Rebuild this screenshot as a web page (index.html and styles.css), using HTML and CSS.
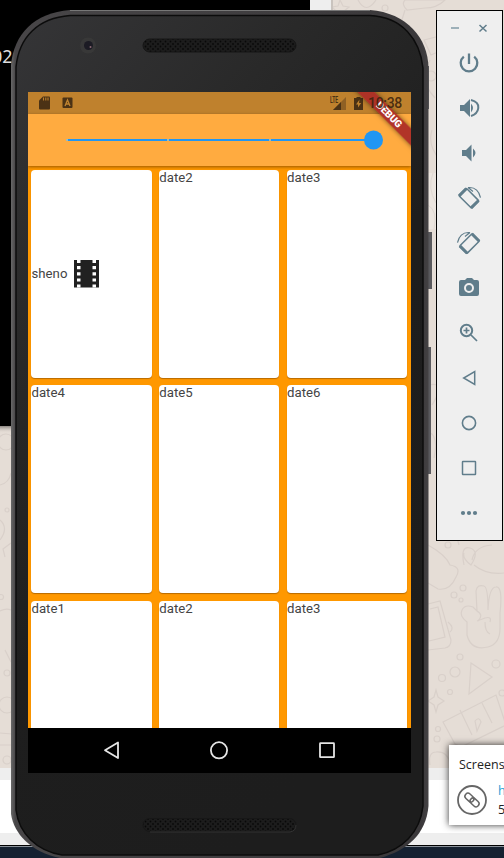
FILE: index.html
```
<!DOCTYPE html>
<html lang="en">
<head>
<meta charset="utf-8">
<title>Emulator</title>
<link rel="stylesheet" href="styles.css">
</head>
<body>
<div class="desktop">
  <svg class="wallpaper" width="504" height="858" viewBox="0 0 504 858">
    <defs><linearGradient id="shade" x1="0" y1="0" x2="0" y2="1"><stop offset="0" stop-color="#8b8580"/><stop offset="1" stop-color="#e5ddd6" stop-opacity="0"/></linearGradient></defs>
    <rect width="504" height="768" fill="#e5ddd6"/>
    <g fill="none" stroke="#d9d0ca" stroke-width="1.2">
      <path d="M340 0l3 6 6 1-5 4 1 6-5-3-5 3 1-6-4-4 6-1zM358 0q8 15 18 0M407 10q-6-6-2-10h40q-8 8-20 8zM405 10l-4 13M424 40l20-5 5 12-18 8zM430 60q-12 20 5 38M432 130q-5 15 8 30"/>
      <circle cx="385" cy="8" r="3"/><circle cx="431" cy="76" r="5"/>
      <path d="M428 545q18 10 22 20q12 2 6 12q-6 14-18 12l-10-6M464 565q-4-20 6-17t1 17q-9-7-7-12M472 560q3-14 20-15M474 565q12 10 30 8"/>
      <path d="M428 604l12-3 11 39q0 7-6 8l-17 2M430 609l8-2 7 30-16 4M448 622q7 6 2 10"/>
      <path d="M467 622q-8-6-5-12t11-3l4 4-1-20q1-7 8-5 4 1 4 24 1-23 8-23 7-1 4 26v15q0 16-12 19-17 4-21-12zM477 611q7 4 1 10M477 621l8-3q7-2 5 4M485 622q0 10 5 12"/>
      <path d="M471 663l21 14-23 17zM428 701l6-4 2-7 2 7 6 4-6 4-2 7-2-7zM443 722l53-27 10 30-45 22-6-3zM460 710l12 25M482 703l10 20M475 721q4-5 6 1l-4 9z"/>
      <path d="M455 530l4 15M430 765q-2-13 6-13 12-1 14 12M429 385q18-4 3 20M429 432q10 5 5 26"/>
      <circle cx="448" cy="545" r="3"/><circle cx="463" cy="588" r="3"/><circle cx="454" cy="595" r="3"/><circle cx="461" cy="600" r="2"/><circle cx="460" cy="657" r="3"/><circle cx="455" cy="672" r="5"/><circle cx="442" cy="678" r="3.500"/><circle cx="496" cy="664" r="4"/><circle cx="450" cy="692" r="2.500"/><circle cx="438" cy="729" r="2.500"/><circle cx="437" cy="739" r="3"/><circle cx="502" cy="693" r="3"/>
      <circle cx="6" cy="442" r="8"/><circle cx="7" cy="510" r="2"/><circle cx="7" cy="673" r="3"/><circle cx="1" cy="597" r="2.500"/><circle cx="7" cy="705" r="8"/><circle cx="7" cy="760" r="4"/>
      <path d="M0 733l12 1M0 745h12M0 485q9-2 11-12M0 520q9 8 0 20M11 543l-8 6 2 8M0 611q6-3 11-1M5 650l6 12"/>
    </g>
    <rect x="310" width="21" height="80" fill="#eee"/>
    <rect x="331" width="2" height="80" fill="#c9c3be"/>
    <rect y="426" width="20" height="7" fill="url(#shade)"/>
    <rect width="310" height="426" fill="#000"/>
    <rect x="400" y="173" width="36" height="56" fill="#ebe5df"/>
    <path d="M433 173q-6 15 3 30M428 205q10 6 6 24" fill="none" stroke="#dfd8d2"/>
    <rect y="768" width="504" height="12" fill="#eee"/>
    <rect y="780" width="504" height="53" fill="#fff"/>
    <rect y="833" width="504" height="12" fill="#eee"/>
    <rect y="845" width="504" height="1" fill="#000"/>
    <rect y="846" width="504" height="1" fill="#8a9199"/>
    <rect y="847" width="504" height="11" fill="#152131"/>
  </svg>
  <span class="terminal-text">02</span>

  <svg class="phone-body" width="436" height="858" viewBox="0 0 436 858">
    <defs>
      <linearGradient id="face" x1="0" y1="0" x2=".55" y2="1"><stop offset="0" stop-color="#353537"/><stop offset=".3" stop-color="#292929"/><stop offset=".6" stop-color="#1e1e1e"/><stop offset="1" stop-color="#1d1d1d"/></linearGradient>
      <linearGradient id="rim"><stop offset="0" stop-color="#686868"/><stop offset=".01" stop-color="#484648"/><stop offset=".98" stop-color="#3a383a"/><stop offset="1" stop-color="#434143"/></linearGradient>
      <pattern id="mesh" x="144" y="40" width="5" height="5" patternUnits="userSpaceOnUse"><rect width="5" height="5" fill="#1c1c1c"/><circle cx="1.500" cy="1.500" r=".9" fill="#080808"/><circle cx="4" cy="4" r=".9" fill="#080808"/></pattern>
    </defs>
    <path d="M428 66h1v43h-1zM428 232h4v57h-4zM428 347h3v127h-3z" fill="#59595d"/>
    <path d="M70 10H370C407 13 428 38 428.500 68V806C426 834 408 850 380 858H60C31 852 14 834 11 814V65C14 34 34 13 70 10Z" fill="url(#rim)"/>
    <path d="M70 15.500H370C402 17 420 39 423 68V806C420 833 402 850 378 855H62C37 851 19 834 16 810V67C19 37 38 18 70 15.500Z" fill="url(#face)" stroke="#0c0c0c" stroke-width="1.500"/>
    <path d="M70 10.500H370" stroke="#777"/>
    <circle cx="88" cy="45.500" r="8" fill="#383838"/><circle cx="88.500" cy="45.500" r="4.500" fill="#1c1b24"/><circle cx="90.500" cy="47" r="1" fill="#8a6874"/>
    <rect x="143" y="39" width="153" height="13" rx="6.500" fill="url(#mesh)" stroke="#171717"/>
    <rect x="143" y="818.500" width="153" height="13" rx="6.500" fill="url(#mesh)" stroke="#171717"/>
    <path d="M150 832H290q6-1 6-7" fill="none" stroke="#333"/>
  </svg>

  <main class="screen">
    <header class="status">
      <svg class="sd" width="11" height="14" viewBox="0 0 11 14"><path d="M4 .5h6q1 0 1 1V12.500q0 1-1 1H1q-1 0-1-1V4.500z" fill="#4b3215"/><path d="M4.500 1.500v3M6.800 1.500v3M9 1.500v3" stroke="#bd802d" stroke-width="1.100"/></svg>
      <svg class="keyboard" width="11" height="12" viewBox="0 0 11 12"><rect x=".5" y=".5" width="10" height="10.500" rx="1" fill="#4b3215"/><path d="M3 9l2.500-6L8 9M4 7h3" fill="none" stroke="#c08430" stroke-width="1.300"/></svg>
      <span class="lte">LTE</span>
      <svg class="signal" width="13" height="13" viewBox="0 0 13 13"><path d="M0 13L13 0v13z" fill="#8f6024"/><path d="M0 13L8 5v8z" fill="#4b3215"/></svg>
      <svg class="battery" width="9" height="13" viewBox="0 0 9 13"><path d="M0 1h2.500V0h4v1H9v12H0z" fill="#4b3215"/><path d="M5.500 2.500L2 7.500h2v3L7.200 6H5z" fill="#bd802d"/></svg>
      <time class="clock">10:38</time>
    </header>
    <section class="appbar">
      <svg width="383" height="52" viewBox="0 0 383 52"><path d="M39 26H345" stroke="#2196f3" stroke-width="2"/><path d="M38 26h2M139 26h2M241 26h2" stroke="#9bbbc0" stroke-width="2"/><circle cx="345.500" cy="26" r="9.500" fill="#2196f3"/></svg>
    </section>
    <section class="grid">
      <article class="card film"><span>sheno</span><svg width="25" height="28" viewBox="0 0 25 28"><path d="M0 0h25v27.500H0z" fill="#212121"/><path d="M3 0h3.500v3H3zM3 6h3.500v3.200H3zM3 12.200h3.500v3.200H3zM3 18.400h3.500v3.200H3zM3 24.600h3.500v3H3zM18.500 0h3.500v3h-3.500zM18.500 6h3.500v3.200h-3.500zM18.500 12.200h3.500v3.200h-3.500zM18.500 18.400h3.500v3.200h-3.500zM18.500 24.600h3.500v3h-3.500z" fill="#fff"/></svg></article>
      <article class="card">date2</article>
      <article class="card">date3</article>
      <article class="card">date4</article>
      <article class="card">date5</article>
      <article class="card">date6</article>
      <article class="card">date1</article>
      <article class="card">date2</article>
      <article class="card">date3</article>
    </section>
    <nav class="navbar">
      <svg width="383" height="45" viewBox="0 0 383 45" fill="none" stroke="#e5e5e5" stroke-width="1.800"><path d="M90 14.500v15.500L77 22.200z" stroke-linejoin="round"/><circle cx="191" cy="22.300" r="8.100"/><rect x="292" y="15.200" width="14" height="14" rx=".5"/></svg>
    </nav>
    <div class="debug"><span>DEBUG</span></div>
  </main>

  <aside class="toolbar">
    <svg width="67" height="531" viewBox="436 10 67 531" fill="none" stroke="#607d8b" stroke-width="2">
      <path d="M451 28h8" stroke="#9db0b9"/><path d="M479.500 25l7 6.500M486.500 25l-7 6.500" stroke-width="1.500"/>
      <path d="M469 53.500v10.500M463.800 56.600a8.300 8.300 0 1 0 10.400 0" stroke-width="2.300"/>
      <g fill="#607d8b" stroke="none"><path d="M460 105h4l6-6v18l-6-6h-4zM471 103.500q4 4.500 0 9z"/><path d="M462 150h4l5.500-5.500v17l-5.500-5.500h-4zM473 148.500q5 4.500 0 9z"/></g>
      <path d="M471 100q8 2 7.300 8t-7.300 8" stroke-width="2"/>
      <g transform="rotate(45 469 198)"><rect x="460" y="193" width="18" height="10.500" rx="1" stroke-width="1.500"/><path d="M460.500 193v10.500M477.500 193v10.500" stroke-width="3"/></g>
      <path d="M468 187.600q10-1 12.500 10M468 187.500l5 4" stroke-width="1.200"/>
      <g transform="rotate(-45 469 243)"><rect x="460" y="238.500" width="18" height="10.500" rx="1" stroke-width="1.500"/><path d="M460.500 238.500v10.500M477.500 238.500v10.500" stroke-width="3"/></g>
      <path d="M470 232.600q-10-1-12.500 10M470 232.500l-5 4" stroke-width="1.200"/>
      <path d="M461 280h4l2-2h5l2 2h3q2 0 2 2v12q0 2-2 2h-16q-2 0-2-2v-12q0-2 2-2z" fill="#607d8b" stroke="none"/><circle cx="469" cy="288" r="4" stroke="#efefef"/>
      <circle cx="466.500" cy="330.500" r="5.700"/><path d="M471 335l6 6M463.500 330.500h6M466.500 327.500v6" stroke-width="1.700"/>
      <path d="M474.700 371.500v13l-11-6.500z" stroke-width="1.500"/>
      <circle cx="469" cy="423" r="6.600" stroke-width="1.600"/>
      <rect x="462.500" y="461.500" width="13" height="13" rx=".5" stroke-width="1.500"/>
      <g fill="#607d8b" stroke="none"><circle cx="463" cy="513" r="2.100"/><circle cx="469" cy="513" r="2.100"/><circle cx="475" cy="513" r="2.100"/></g>
    </svg>
  </aside>

  <aside class="toast">
    <h2>Screens</h2>
    <div class="toast-row">
      <svg width="30" height="30" viewBox="0 0 30 30" fill="none" stroke="#666"><circle cx="15" cy="15" r="14" stroke-width="1.800"/><g transform="rotate(43 15 15)" stroke-width="1.500"><rect x="6.500" y="12" width="10" height="6" rx="3"/><rect x="13.500" y="12" width="10" height="6" rx="3"/></g></svg>
      <p><span class="link">h</span><br>5</p>
    </div>
  </aside>
</div>
</body>
</html>
```
FILE: styles.css
```
body { margin: 0; }
.desktop { position: relative; width: 504px; height: 858px; overflow: hidden; font-family: Roboto, sans-serif; }
.desktop svg { display: block; }
.wallpaper, .phone-body { position: absolute; left: 0; top: 0; }
.terminal-text { position: absolute; left: -8px; top: 45px; font: 18px/22px "Noto Sans", sans-serif; color: #ddd; }
.phone-body { z-index: 1; }
.screen { position: absolute; z-index: 2; left: 28px; top: 92px; width: 383px; height: 681px; overflow: hidden; display: flex; flex-direction: column; background: #ff9800; }
.status { height: 22px; flex: none; display: flex; align-items: center; background: #bf812d; color: #4b3215; box-sizing: border-box; padding: 0 8px 0 11px; }
.status svg { flex: none; }
.sd { margin-top: -1px; }
.keyboard { margin: -1px 0 0 12px; }
.lte { margin-left: auto; margin-bottom: 7px; font: 700 9px/10px Roboto, sans-serif; width: 3px; transform: scaleX(.56); transform-origin: left; }
.battery { margin: 0 8px 0 8px; }
.clock { position: relative; z-index: 3; font-weight: 500; font-size: 14px; line-height: 22px; width: 32px; margin-left: -1px; margin-right: 1px; letter-spacing: -.3px; white-space: nowrap; display: flex; justify-content: flex-end; color: rgba(60,36,14,.9); }
.appbar { height: 52px; flex: none; background: #ffab40; z-index: 1; box-shadow: 0 1px 3px rgba(70,35,0,.55); }
.appbar, .debug { position: relative; }
.grid { flex: 1; min-height: 0; overflow: hidden; padding: 4px 3px 0; display: grid; grid-template-columns: repeat(3, 120.5px); grid-auto-rows: 208px; gap: 7.4px 7.3px; }
.card { background: #fff; border-radius: 4px; box-shadow: 0 1px 1px rgba(80,40,0,.4); color: #444; font-size: 13.2px; line-height: 16px; letter-spacing: .05px; box-sizing: border-box; padding-left: .4px; }
.film { display: flex; align-items: center; gap: 6.5px; }
.navbar { height: 45px; flex: none; background: #000; }
.screen .debug { position: absolute; z-index: 2; left: 305.5px; top: 16.5px; width: 110px; height: 12px; transform: rotate(45deg); background: rgba(172,45,38,.94); box-shadow: 0 0 5px rgba(0,0,0,.55); color: #fff; text-align: center; font: 900 10px/12px Roboto, sans-serif; }
.toolbar { position: absolute; z-index: 3; left: 436px; top: 10px; width: 67px; height: 531px; background: #efefef; outline: 1px solid #000; outline-offset: -1px; }
.toast { position: absolute; z-index: 3; left: 449px; top: 745px; width: 120px; height: 80px; box-sizing: border-box; padding: 10px 8px; background: #fff; box-shadow: 0 0 7px rgba(0,0,0,.8); color: #222; }
.toast h2 { margin: 0 0 10px 2px; font: 12.5px/20px "Open Sans", sans-serif; }
.toast-row { display: flex; gap: 11px; }
.toast-row svg { flex: none; }
.toast p { margin: -4px 0 0; font: 12.5px/19px "Open Sans", sans-serif; }
.link { color: #2a9fd6; }
```
